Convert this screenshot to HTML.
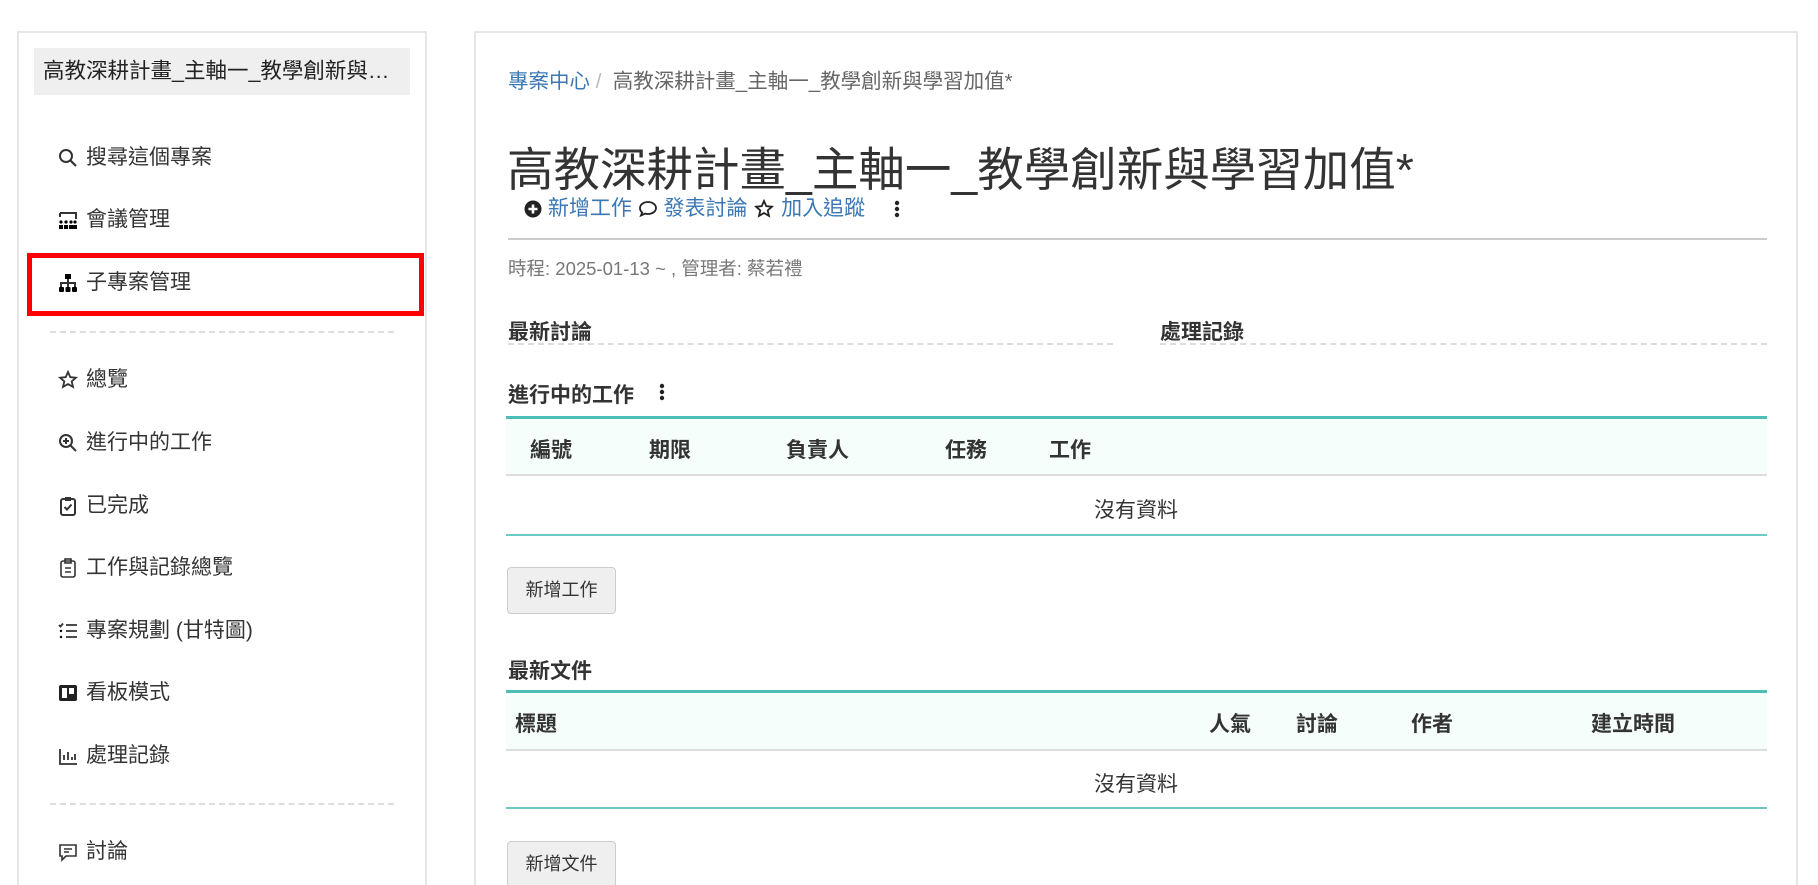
<!DOCTYPE html>
<html><head><meta charset="utf-8"><style>
*{box-sizing:border-box;margin:0;padding:0}
html,body{width:1818px;height:885px;overflow:hidden}
body{background:#fff;font-family:"Liberation Sans","Noto Sans CJK TC",sans-serif;color:#333;position:relative}
.a{position:absolute;white-space:nowrap}
.side{position:absolute;left:17px;top:31px;width:410px;height:870px;border:2px solid #e6e6e6;border-bottom:none}
.main{position:absolute;left:474px;top:31px;width:1324px;height:870px;border:2px solid #e6e6e6;border-bottom:none}
.mi{position:absolute;left:58px;font-size:21px;line-height:26px;color:#333;display:flex;align-items:center}
.mi svg{width:20px;height:20px;margin-right:8px}
.dash{position:absolute;border-top:2px dashed #ddd}
.th{position:absolute;font-size:21px;font-weight:bold;color:#333}
</style></head><body>
<div class="side"></div>
<div class="a" style="left:34px;top:48px;width:376px;height:47px;background:#efefef;font-size:21.5px;line-height:47px;padding-left:9px;padding-right:10px;color:#222;overflow:hidden;text-overflow:ellipsis">高教深耕計畫_主軸一_教學創新與學習加值*</div>

<div class="mi" style="top:145px"><svg viewBox="0 0 20 20"><circle cx="8" cy="8" r="6" fill="none" stroke="#333" stroke-width="2"/><path d="M12.5 12.5L18 18" stroke="#333" stroke-width="2.2"/></svg>搜尋這個專案</div>
<div class="mi" style="top:207px"><svg viewBox="0 0 20 20"><path d="M2 3h16v6M2 3v4" fill="none" stroke="#333" stroke-width="2"/><circle cx="3" cy="12" r="1.6"/><circle cx="8" cy="12" r="1.6"/><circle cx="13" cy="12" r="1.6"/><circle cx="17" cy="12" r="1.6"/><rect x="1" y="15" width="4" height="4"/><rect x="6" y="15" width="4" height="4"/><rect x="11" y="15" width="4" height="4"/><rect x="15" y="15" width="4" height="4"/></svg>會議管理</div>
<div class="a" style="left:27px;top:253px;width:397px;height:63px;border:5px solid #f00"></div>
<div class="mi" style="top:270px"><svg viewBox="0 0 20 20"><rect x="7" y="1" width="6" height="5"/><path d="M10 6v4M3 14v-4h14v4M10 10v4" fill="none" stroke="#333" stroke-width="2"/><rect x="1" y="14" width="5" height="5" rx="1"/><rect x="7.5" y="14" width="5" height="5" rx="1"/><rect x="14" y="14" width="5" height="5" rx="1"/></svg>子專案管理</div>
<div class="dash" style="left:50px;top:331px;width:344px"></div>
<div class="mi" style="top:367px"><svg viewBox="0 0 20 20"><path d="M10 2l2.3 5.2 5.6.5-4.2 3.7 1.3 5.5L10 14l-5 2.9 1.3-5.5L2.1 7.7l5.6-.5z" fill="none" stroke="#333" stroke-width="1.8"/></svg>總覽</div>
<div class="mi" style="top:430px"><svg viewBox="0 0 20 20"><circle cx="8" cy="8" r="6" fill="none" stroke="#333" stroke-width="2"/><path d="M12.5 12.5L18 18M8 5v6M5 8h6" stroke="#333" stroke-width="2"/></svg>進行中的工作</div>
<div class="mi" style="top:493px"><svg viewBox="0 0 20 20"><rect x="3" y="3" width="14" height="16" rx="2" fill="none" stroke="#333" stroke-width="2"/><rect x="7" y="1" width="6" height="4" fill="#333"/><path d="M6.5 11l2.5 2.5 4.5-5" fill="none" stroke="#333" stroke-width="2"/></svg>已完成</div>
<div class="mi" style="top:555px"><svg viewBox="0 0 20 20"><rect x="3" y="3" width="14" height="16" rx="2" fill="none" stroke="#333" stroke-width="1.6"/><rect x="7" y="1" width="6" height="4" fill="none" stroke="#333" stroke-width="1.6"/><path d="M7 10h6M7 14h6" stroke="#333" stroke-width="1.6"/></svg>工作與記錄總覽</div>
<div class="mi" style="top:618px"><svg viewBox="0 0 20 20"><path d="M1 4l1.5 1.5L5 2.5M8 4h11M8 10h11M8 16h11" fill="none" stroke="#333" stroke-width="1.8"/><circle cx="3" cy="10" r="1.2"/><circle cx="3" cy="16" r="1.2"/></svg>專案規劃 (甘特圖)</div>
<div class="mi" style="top:680px"><svg viewBox="0 0 20 20"><rect x="1" y="2" width="18" height="16" rx="2" fill="#222"/><rect x="4" y="5" width="5" height="10" fill="#fff"/><rect x="11" y="5" width="5" height="6" fill="#fff"/></svg>看板模式</div>
<div class="mi" style="top:743px"><svg viewBox="0 0 20 20"><path d="M2 3v15h17M6 14V9M10 14V6M14 14v-3M17 14V8" fill="none" stroke="#333" stroke-width="1.8"/></svg>處理記錄</div>
<div class="dash" style="left:50px;top:803px;width:344px"></div>
<div class="mi" style="top:839px"><svg viewBox="0 0 20 20"><path d="M2 3h16v11H8l-4 4v-4H2z" fill="none" stroke="#333" stroke-width="1.6"/><path d="M6 7h8M6 10h5" stroke="#333" stroke-width="1.6"/></svg>討論</div>

<div class="main"></div>
<div class="a" style="left:508px;top:64px;font-size:20.5px;color:#666"><span style="color:#3a78b5">專案中心</span> <span style="color:#bbb">/</span>&nbsp; 高教深耕計畫_主軸一_教學創新與學習加值*</div>
<div class="a" style="left:507px;top:142px;font-size:46.5px;line-height:56px;color:#333">高教深耕計畫_主軸一_教學創新與學習加值*</div>
<div class="a" style="left:524px;top:196px;font-size:21px;line-height:26px;color:#3a78b5;display:flex;align-items:center">
<svg width="18" height="18" viewBox="0 0 18 18"><circle cx="9" cy="9" r="8.5" fill="#222"/><path d="M9 4.5v9M4.5 9h9" stroke="#fff" stroke-width="2.6"/></svg>&nbsp;新增工作&nbsp;
<svg width="20" height="18" viewBox="0 0 20 18"><path d="M10 2c4.5 0 8 2.6 8 6s-3.5 6-8 6c-1 0-2-.1-2.8-.4L3 15.5l1.2-3C2.8 11.4 2 9.8 2 8c0-3.4 3.5-6 8-6z" fill="none" stroke="#222" stroke-width="1.8"/></svg>&nbsp;發表討論&nbsp;
<svg width="22" height="20" viewBox="0 0 20 20"><path d="M10 2l2.3 5.2 5.6.5-4.2 3.7 1.3 5.5L10 14l-5 2.9 1.3-5.5L2.1 7.7l5.6-.5z" fill="none" stroke="#222" stroke-width="1.8"/></svg>&nbsp;加入追蹤&nbsp;&nbsp;&nbsp;&nbsp;&nbsp;
<svg width="6" height="20" viewBox="0 0 6 20"><circle cx="3" cy="4" r="2.2" fill="#222"/><circle cx="3" cy="10" r="2.2" fill="#222"/><circle cx="3" cy="16" r="2.2" fill="#222"/></svg></div>
<div class="a" style="left:508px;top:238px;width:1259px;border-top:2px solid #ccc"></div>
<div class="a" style="left:508px;top:255px;font-size:18.5px;color:#777">時程: 2025-01-13 ~ , 管理者: 蔡若禮</div>
<div class="th" style="left:508px;top:316px">最新討論</div>
<div class="dash" style="left:508px;top:343px;width:605px"></div>
<div class="th" style="left:1160px;top:316px">處理記錄</div>
<div class="dash" style="left:1160px;top:343px;width:607px"></div>
<div class="th" style="left:508px;top:379px">進行中的工作</div>
<svg class="a" style="left:659px;top:382px" width="6" height="20" viewBox="0 0 6 20"><circle cx="3" cy="4" r="2.2" fill="#222"/><circle cx="3" cy="10" r="2.2" fill="#222"/><circle cx="3" cy="16" r="2.2" fill="#222"/></svg>

<div class="a" style="left:506px;top:416px;width:1261px;height:60px;background:#f5fefb;border-top:3px solid #4dbdb8;border-bottom:2px solid #ddd"></div>
<div class="th" style="left:530px;top:434px">編號</div><div class="th" style="left:649px;top:434px">期限</div><div class="th" style="left:786px;top:434px">負責人</div><div class="th" style="left:945px;top:434px">任務</div><div class="th" style="left:1049px;top:434px">工作</div>
<div class="a" style="left:1094px;top:494px;font-size:21px">沒有資料</div>
<div class="a" style="left:506px;top:534px;width:1261px;border-top:2px solid #6ccac5"></div>
<div class="a" style="left:507px;top:567px;width:109px;height:47px;background:#efefef;border:1px solid #ccc;border-radius:4px;font-size:18px;line-height:45px;text-align:center;color:#333">新增工作</div>

<div class="th" style="left:508px;top:655px">最新文件</div>
<div class="a" style="left:506px;top:690px;width:1261px;height:61px;background:#f5fefb;border-top:3px solid #4dbdb8;border-bottom:2px solid #ddd"></div>
<div class="th" style="left:515px;top:708px">標題</div><div class="th" style="left:1209px;top:708px">人氣</div><div class="th" style="left:1296px;top:708px">討論</div><div class="th" style="left:1411px;top:708px">作者</div><div class="th" style="left:1591px;top:708px">建立時間</div>
<div class="a" style="left:1094px;top:768px;font-size:21px">沒有資料</div>
<div class="a" style="left:506px;top:807px;width:1261px;border-top:2px solid #6ccac5"></div>
<div class="a" style="left:507px;top:841px;width:109px;height:47px;background:#efefef;border:1px solid #ccc;border-radius:4px;font-size:18px;line-height:45px;text-align:center;color:#333">新增文件</div>
</body></html>
